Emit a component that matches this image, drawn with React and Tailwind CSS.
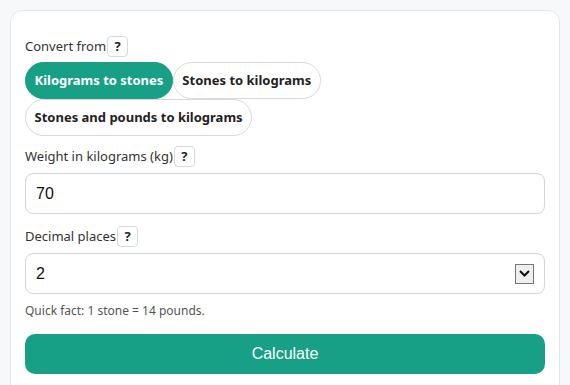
import React from "react";

function Help() {
  return (
    <span className="ml-[1px] inline-flex h-[21px] w-[21px] items-center justify-center rounded-[4px] border border-[#d5dade] bg-white text-[13px] font-bold text-[#222]">
      ?
    </span>
  );
}

function Label({ children }) {
  return (
    <div className="flex items-center text-[13px] text-[#333]">
      <span>{children}</span>
      <Help />
    </div>
  );
}

export default function App() {
  const modes = ["Kilograms to stones", "Stones to kilograms", "Stones and pounds to kilograms"];
  return (
    <div className="min-h-screen bg-[#f7f8f9] px-[10px] pt-[10px] font-['Noto_Sans',sans-serif]">
      <div className="h-[400px] rounded-[12px] border border-[#e3e6e8] bg-white px-[14px] pt-[25px]">
        <Label>Convert from</Label>
        <div className="mt-[5px] flex flex-wrap">
          {modes.map((m, i) => (
            <button
              key={m}
              className={
                i === 0
                  ? "h-[37px] rounded-full border border-[#17a085] bg-[#17a085] px-[8.5px] text-[13px] font-bold text-white"
                  : "h-[37px] rounded-full border border-[#d5dade] bg-white px-[8.5px] text-[13px] font-bold text-[#222]"
              }
            >
              {m}
            </button>
          ))}
        </div>
        <div className="mt-[10px]">
          <Label>Weight in kilograms (kg)</Label>
        </div>
        <div className="mt-[6px] flex h-[41px] items-center rounded-[8px] border border-[#d0d6da] px-[10px] font-['Liberation_Sans',sans-serif] text-[16px] text-[#111]">
          70
        </div>
        <div className="mt-[12px]">
          <Label>Decimal places</Label>
        </div>
        <div className="mt-[6px] flex h-[41px] items-center justify-between rounded-[8px] border border-[#d0d6da] pl-[10px] pr-[10px] font-['Liberation_Sans',sans-serif] text-[16px] text-[#111]">
          <span>2</span>
          <span className="flex h-[20px] w-[19px] items-center justify-center border border-[#767676] bg-[#efefef]">
            <svg width="11" height="7" viewBox="0 0 11 7">
              <path d="M1 1l4.5 4.5L10 1" fill="none" stroke="#111" strokeWidth="2" />
            </svg>
          </span>
        </div>
        <div className="mt-[8px] text-[12px] text-[#555]">Quick fact: 1 stone = 14 pounds.</div>
        <button className="mt-[14px] h-[40px] w-full rounded-[10px] bg-[#17a085] font-['Liberation_Sans',sans-serif] text-[16px] text-white">
          Calculate
        </button>
      </div>
    </div>
  );
}
